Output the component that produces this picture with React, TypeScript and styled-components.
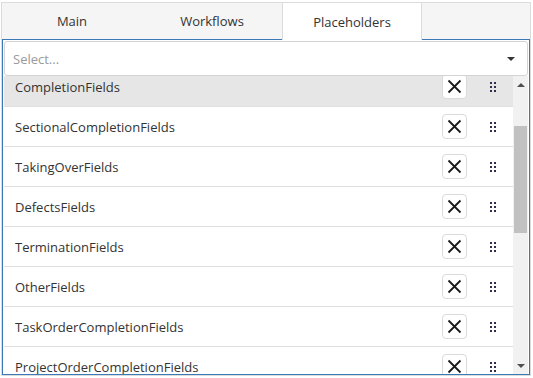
import React from "react";
import styled, { createGlobalStyle } from "styled-components";

const GlobalStyle = createGlobalStyle`
  body {
    margin: 0;
    background: #ffffff;
    font-family: "Open Sans", "Noto Sans", sans-serif;
  }
`;

const Page = styled.div`
  width: 533px;
  height: 378px;
  padding: 2px 2px 0 1px;
  box-sizing: border-box;
`;

const Frame = styled.div`
  border: 1px solid #dcdcdc;
  height: 374px;
  box-sizing: border-box;
  display: flex;
  flex-direction: column;
`;

const TabBar = styled.div`
  display: flex;
  height: 37px;
  background: #f5f5f5;
  border-bottom: 1px solid #3b79b7;
  box-sizing: border-box;
`;

const Tab = styled.div<{ $active?: boolean }>`
  width: 140px;
  display: flex;
  align-items: center;
  justify-content: center;
  font-size: 13px;
  color: #333;
  box-sizing: border-box;
  background: ${(p) => (p.$active ? "#ffffff" : "transparent")};
  border-left: 1px solid ${(p) => (p.$active ? "#dcdcdc" : "transparent")};
  border-right: 1px solid ${(p) => (p.$active ? "#dcdcdc" : "transparent")};
  height: ${(p) => (p.$active ? "37px" : "36px")};
`;

const Panel = styled.div`
  flex: 1;
  border: 1px solid #3b79b7;
  border-top: none;
  display: flex;
  flex-direction: column;
  padding: 1px 1px 0 1px;
  min-height: 0;
`;

const SelectBox = styled.div`
  height: 35px;
  border: 1px solid #d4d4d4;
  border-radius: 3px;
  display: flex;
  align-items: center;
  justify-content: space-between;
  padding: 0 12px 0 8px;
  box-sizing: border-box;
  font-size: 13px;
  color: #9a9a9a;
`;

const Caret = styled.div<{ $up?: boolean; $color?: string }>`
  width: 0;
  height: 0;
  border-left: 4px solid transparent;
  border-right: 4px solid transparent;
  ${(p) =>
    p.$up
      ? `border-bottom: 4px solid ${p.$color || "#333"};`
      : `border-top: 4px solid ${p.$color || "#333"};`}
`;

const ListArea = styled.div`
  flex: 1;
  display: flex;
  min-height: 0;
  overflow: hidden;
`;

const List = styled.div`
  flex: 1;
  overflow: hidden;
`;

const Rows = styled.div`
  margin-top: -9px;
`;

const Row = styled.div<{ $selected?: boolean }>`
  height: 40px;
  display: flex;
  align-items: center;
  border-bottom: 1px solid #e0e0e0;
  background: ${(p) => (p.$selected ? "#e6e6e6" : "#ffffff")};
  padding: 0 17px 0 11px;
  box-sizing: border-box;
`;

const Label = styled.span`
  flex: 1;
  font-size: 13px;
  color: #333;
`;

const RemoveButton = styled.div`
  width: 25px;
  height: 25px;
  box-sizing: border-box;
  border: 1px solid #dadada;
  border-radius: 4px;
  background: #fff;
  display: flex;
  align-items: center;
  justify-content: center;
  margin-right: 23px;
`;

const Handle = styled.div`
  display: grid;
  grid-template-columns: 2px 2px;
  grid-auto-rows: 2px;
  column-gap: 2px;
  row-gap: 2px;
`;

const Dot = styled.span`
  background: #2f2f4a;
`;

const ScrollBar = styled.div`
  width: 15px;
  background: #f1f1f1;
  display: flex;
  flex-direction: column;
  align-items: center;
`;

const ArrowCell = styled.div`
  height: 17px;
  width: 15px;
  display: flex;
  align-items: center;
  justify-content: center;
`;

const Track = styled.div`
  flex: 1;
  width: 15px;
  display: flex;
  flex-direction: column;
  align-items: center;
`;

const Thumb = styled.div`
  width: 13px;
  height: 107px;
  margin-top: 33px;
  background: #c1c1c1;
`;

const fields = [
  "CompletionFields",
  "SectionalCompletionFields",
  "TakingOverFields",
  "DefectsFields",
  "TerminationFields",
  "OtherFields",
  "TaskOrderCompletionFields",
  "ProjectOrderCompletionFields",
];

function CloseIcon() {
  return (
    <svg width="15" height="15" viewBox="0 0 15 15">
      <path d="M1.5 1.5 L13.5 13.5 M13.5 1.5 L1.5 13.5" stroke="#1a1a1a" strokeWidth="1.8" />
    </svg>
  );
}

export default function App() {
  return (
    <Page>
      <GlobalStyle />
      <Frame>
        <TabBar>
          <Tab>Main</Tab>
          <Tab>Workflows</Tab>
          <Tab $active>Placeholders</Tab>
        </TabBar>
        <Panel>
          <SelectBox>
            <span>Select...</span>
            <Caret />
          </SelectBox>
          <ListArea>
            <List>
              <Rows>
                {fields.map((f, i) => (
                  <Row key={f} $selected={i === 0}>
                    <Label>{f}</Label>
                    <RemoveButton>
                      <CloseIcon />
                    </RemoveButton>
                    <Handle>
                      {Array.from({ length: 6 }).map((_, d) => (
                        <Dot key={d} />
                      ))}
                    </Handle>
                  </Row>
                ))}
              </Rows>
            </List>
            <ScrollBar>
              <ArrowCell>
                <Caret $up $color="#505050" />
              </ArrowCell>
              <Track>
                <Thumb />
              </Track>
              <ArrowCell>
                <Caret $color="#505050" />
              </ArrowCell>
            </ScrollBar>
          </ListArea>
        </Panel>
      </Frame>
    </Page>
  );
}
